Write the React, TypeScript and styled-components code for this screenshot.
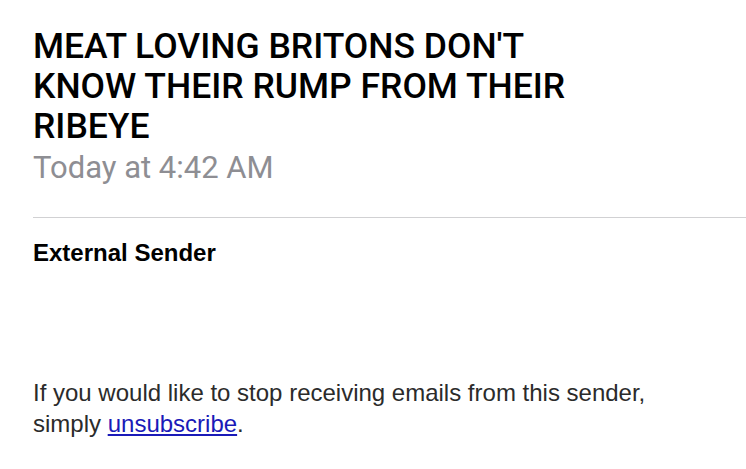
import React from "react";
import styled, { createGlobalStyle } from "styled-components";

const GlobalStyle = createGlobalStyle`
  html, body {
    margin: 0;
    padding: 0;
    background: #fff;
  }
`;

const App = () => {
  return (
    <>
      <GlobalStyle />
      <S.Page>
        <S.Header>
          <S.Subject>MEAT LOVING BRITONS DON'T KNOW THEIR RUMP FROM THEIR RIBEYE</S.Subject>
          <S.Date>Today at 4:42 AM</S.Date>
        </S.Header>
        <S.Divider />
        <S.Body>
          <S.Notice>External Sender</S.Notice>
          <S.Footer>
            If you would like to stop receiving emails from this sender, simply{" "}
            <S.Link href="#">unsubscribe</S.Link>.
          </S.Footer>
        </S.Body>
      </S.Page>
    </>
  );
};

export default App;

const S = {
  Page: styled.div`
    width: 746px;
    height: 469px;
    overflow: hidden;
    padding-left: 33px;
    box-sizing: border-box;
  `,
  Header: styled.div`
    padding-top: 26px;
    padding-right: 140px;
  `,
  Subject: styled.h1`
    margin: 0;
    font-family: Roboto, "Noto Sans", sans-serif;
    font-weight: 500;
    font-size: 35.5px;
    line-height: 40px;
    color: #000;
  `,
  Date: styled.div`
    margin-top: 3px;
    font-family: Roboto, "Noto Sans", sans-serif;
    font-size: 31px;
    line-height: 38px;
    color: #8e8e93;
  `,
  Divider: styled.hr`
    margin: 30px 0 0 0;
    border: none;
    border-top: 1px solid #d1d1d3;
  `,
  Body: styled.div`
    padding-top: 21px;
    padding-right: 40px;
    font-family: "Liberation Sans", Arial, sans-serif;
  `,
  Notice: styled.div`
    font-weight: bold;
    font-size: 24px;
    line-height: 28px;
    color: #000;
  `,
  Footer: styled.p`
    margin: 110px 0 0 0;
    font-size: 24px;
    line-height: 31px;
    color: #2b2b2b;
  `,
  Link: styled.a`
    color: #1a1ab8;
    text-decoration: underline;
  `,
};
